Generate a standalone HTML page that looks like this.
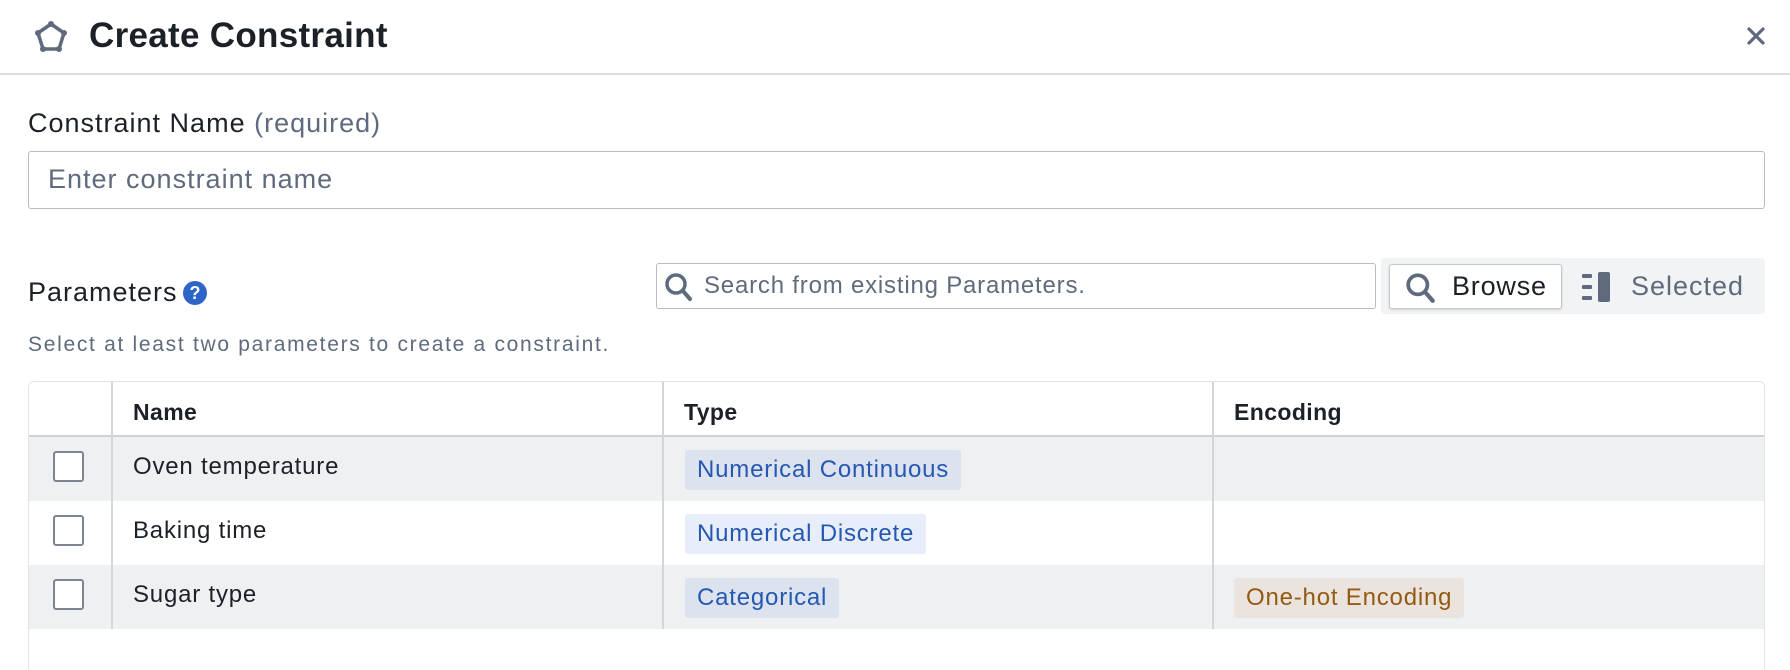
<!DOCTYPE html>
<html style="width:1790px;height:670px;overflow:hidden"><head><style>
*{box-sizing:border-box;margin:0;padding:0}
body{width:1790px;height:670px;overflow:hidden;background:#fff;font-family:"Liberation Sans",sans-serif;color:#1c2127;position:relative}
.a{position:absolute}
.hdr{left:0;top:0;width:1790px;height:75px;border-bottom:2px solid #dcdcdc}
.title{left:89px;top:16px;font-size:35px;font-weight:bold;line-height:40px;letter-spacing:0.3px}
.lbl{left:28px;top:107px;font-size:27px;line-height:32px;letter-spacing:1px}
.gray{color:#5f6b7c}
.inp{left:28px;top:151px;width:1737px;height:58px;border:1.5px solid #b8bcc2;border-radius:3px;font-size:27px;color:#5f6b7c;padding-left:19px;line-height:55px;letter-spacing:1px}
.plabel{left:28px;top:276px;font-size:27px;line-height:32px;letter-spacing:1px}
.help{left:183px;top:281px;width:24px;height:24px;border-radius:50%;background:#2d65c8;color:#fff;font-weight:bold;font-size:18px;text-align:center;line-height:24px}
.search{left:656px;top:263px;width:720px;height:46px;border:1.5px solid #b8bcc2;border-radius:3px;font-size:24px;color:#5f6b7c;padding-left:47px;line-height:43px;letter-spacing:0.8px}
.seg{left:1381px;top:258px;width:384px;height:56px;background:#f2f3f5;border-radius:3px}
.browse{left:1389px;top:264px;width:173px;height:45px;background:#fff;border:1.5px solid #c5c8cd;border-radius:3px;box-shadow:0 1px 2px rgba(0,0,0,.15);font-size:27px;line-height:42px;padding-left:62px;letter-spacing:0.8px}
.sel{left:1631px;top:264px;font-size:27px;line-height:45px;color:#5f6b7c;letter-spacing:1px}
.help2{left:28px;top:332px;font-size:21px;color:#5f6b7c;line-height:26px;letter-spacing:1.7px}
.tbl{left:28px;top:381px;width:1737px;height:289px;border:1.5px solid #e2e3e5;border-bottom:none;border-radius:6px 6px 0 0;overflow:hidden}
.row{position:absolute;left:0;width:1737px;height:64px}
.vl{position:absolute;top:0;width:1.5px;height:247px;background:#d3d5d9}
.th{position:absolute;top:17px;font-size:23px;font-weight:bold;letter-spacing:0.4px}
.td{position:absolute;font-size:24px;line-height:28px;letter-spacing:0.8px}
.cb{position:absolute;left:24px;width:31px;height:31px;border:2px solid #7d8592;border-radius:3px;background:#fff}
.badge{position:absolute;height:40px;border-radius:3px;font-size:24px;line-height:40px;padding:0 12px;letter-spacing:0.8px}
.blue{background:#dce3ee;color:#2458b3}
.lblue{background:#e7eef9;color:#2458b3}
.or{background:#ebe4de;color:#935a12}
</style></head><body>
<div class="a hdr"></div>
<svg class="a" style="left:33px;top:19px" width="36" height="36" viewBox="0 0 36 36"><path d="M18 5 L31 14 L26 30 L10 30 L5 14 Z" fill="none" stroke="#5f6b7c" stroke-width="3.5" stroke-linejoin="round"/><g fill="#5f6b7c"><circle cx="18" cy="5" r="3"/><circle cx="31" cy="14" r="3"/><circle cx="26" cy="30" r="3"/><circle cx="10" cy="30" r="3"/><circle cx="5" cy="14" r="3"/></g></svg>
<div class="a title">Create Constraint</div>
<svg class="a" style="left:1746px;top:26px" width="20" height="20" viewBox="0 0 20 20"><path d="M3 3L17 17M17 3L3 17" stroke="#5f6b7c" stroke-width="3.2" stroke-linecap="round"/></svg>
<div class="a lbl">Constraint Name <span class="gray">(required)</span></div>
<div class="a inp">Enter constraint name</div>
<div class="a plabel">Parameters</div>
<div class="a help">?</div>
<div class="a search">Search from existing Parameters.</div>
<svg class="a" style="left:664px;top:272px" width="30" height="30" viewBox="0 0 30 30"><circle cx="12" cy="12" r="9" fill="none" stroke="#5f6b7c" stroke-width="3.5"/><path d="M19 19L26 27" stroke="#5f6b7c" stroke-width="4" stroke-linecap="round"/></svg>
<div class="a seg"></div>
<div class="a browse">Browse</div>
<svg class="a" style="left:1405px;top:272px" width="32" height="32" viewBox="0 0 30 30"><circle cx="12" cy="12" r="9" fill="none" stroke="#5f6b7c" stroke-width="3.5"/><path d="M19 19L26 27" stroke="#5f6b7c" stroke-width="4" stroke-linecap="round"/></svg>
<svg class="a" style="left:1582px;top:272px" width="32" height="30" viewBox="0 0 32 30"><g fill="#5f6b7c"><rect x="0" y="2" width="10" height="4" rx="1"/><rect x="0" y="13" width="10" height="4" rx="1"/><rect x="0" y="24" width="10" height="4" rx="1"/><rect x="16" y="0" width="12" height="30" rx="2"/></g></svg>
<div class="a sel">Selected</div>
<div class="a help2">Select at least two parameters to create a constraint.</div>
<div class="a tbl">
 <div class="row" style="top:0;height:55px;border-bottom:2.5px solid #cfd1d5"></div>
 <div class="row" style="top:55px;background:#eef0f2"></div>
 <div class="row" style="top:119px;background:#fff"></div>
 <div class="row" style="top:183px;background:#eef0f2"></div>
 <div class="vl" style="left:82px"></div>
 <div class="vl" style="left:633px"></div>
 <div class="vl" style="left:1183px"></div>
 <div class="th" style="left:104px">Name</div>
 <div class="th" style="left:655px">Type</div>
 <div class="th" style="left:1205px">Encoding</div>
 <div class="cb" style="top:69px"></div>
 <div class="cb" style="top:133px"></div>
 <div class="cb" style="top:197px"></div>
 <div class="td" style="left:104px;top:71px">Oven temperature</div>
 <div class="td" style="left:104px;top:135px">Baking time</div>
 <div class="td" style="left:104px;top:199px">Sugar type</div>
 <div class="badge blue" style="left:656px;top:68px">Numerical Continuous</div>
 <div class="badge lblue" style="left:656px;top:132px">Numerical Discrete</div>
 <div class="badge blue" style="left:656px;top:196px">Categorical</div>
 <div class="badge or" style="left:1205px;top:196px">One-hot Encoding</div>
</div>
</body></html>
